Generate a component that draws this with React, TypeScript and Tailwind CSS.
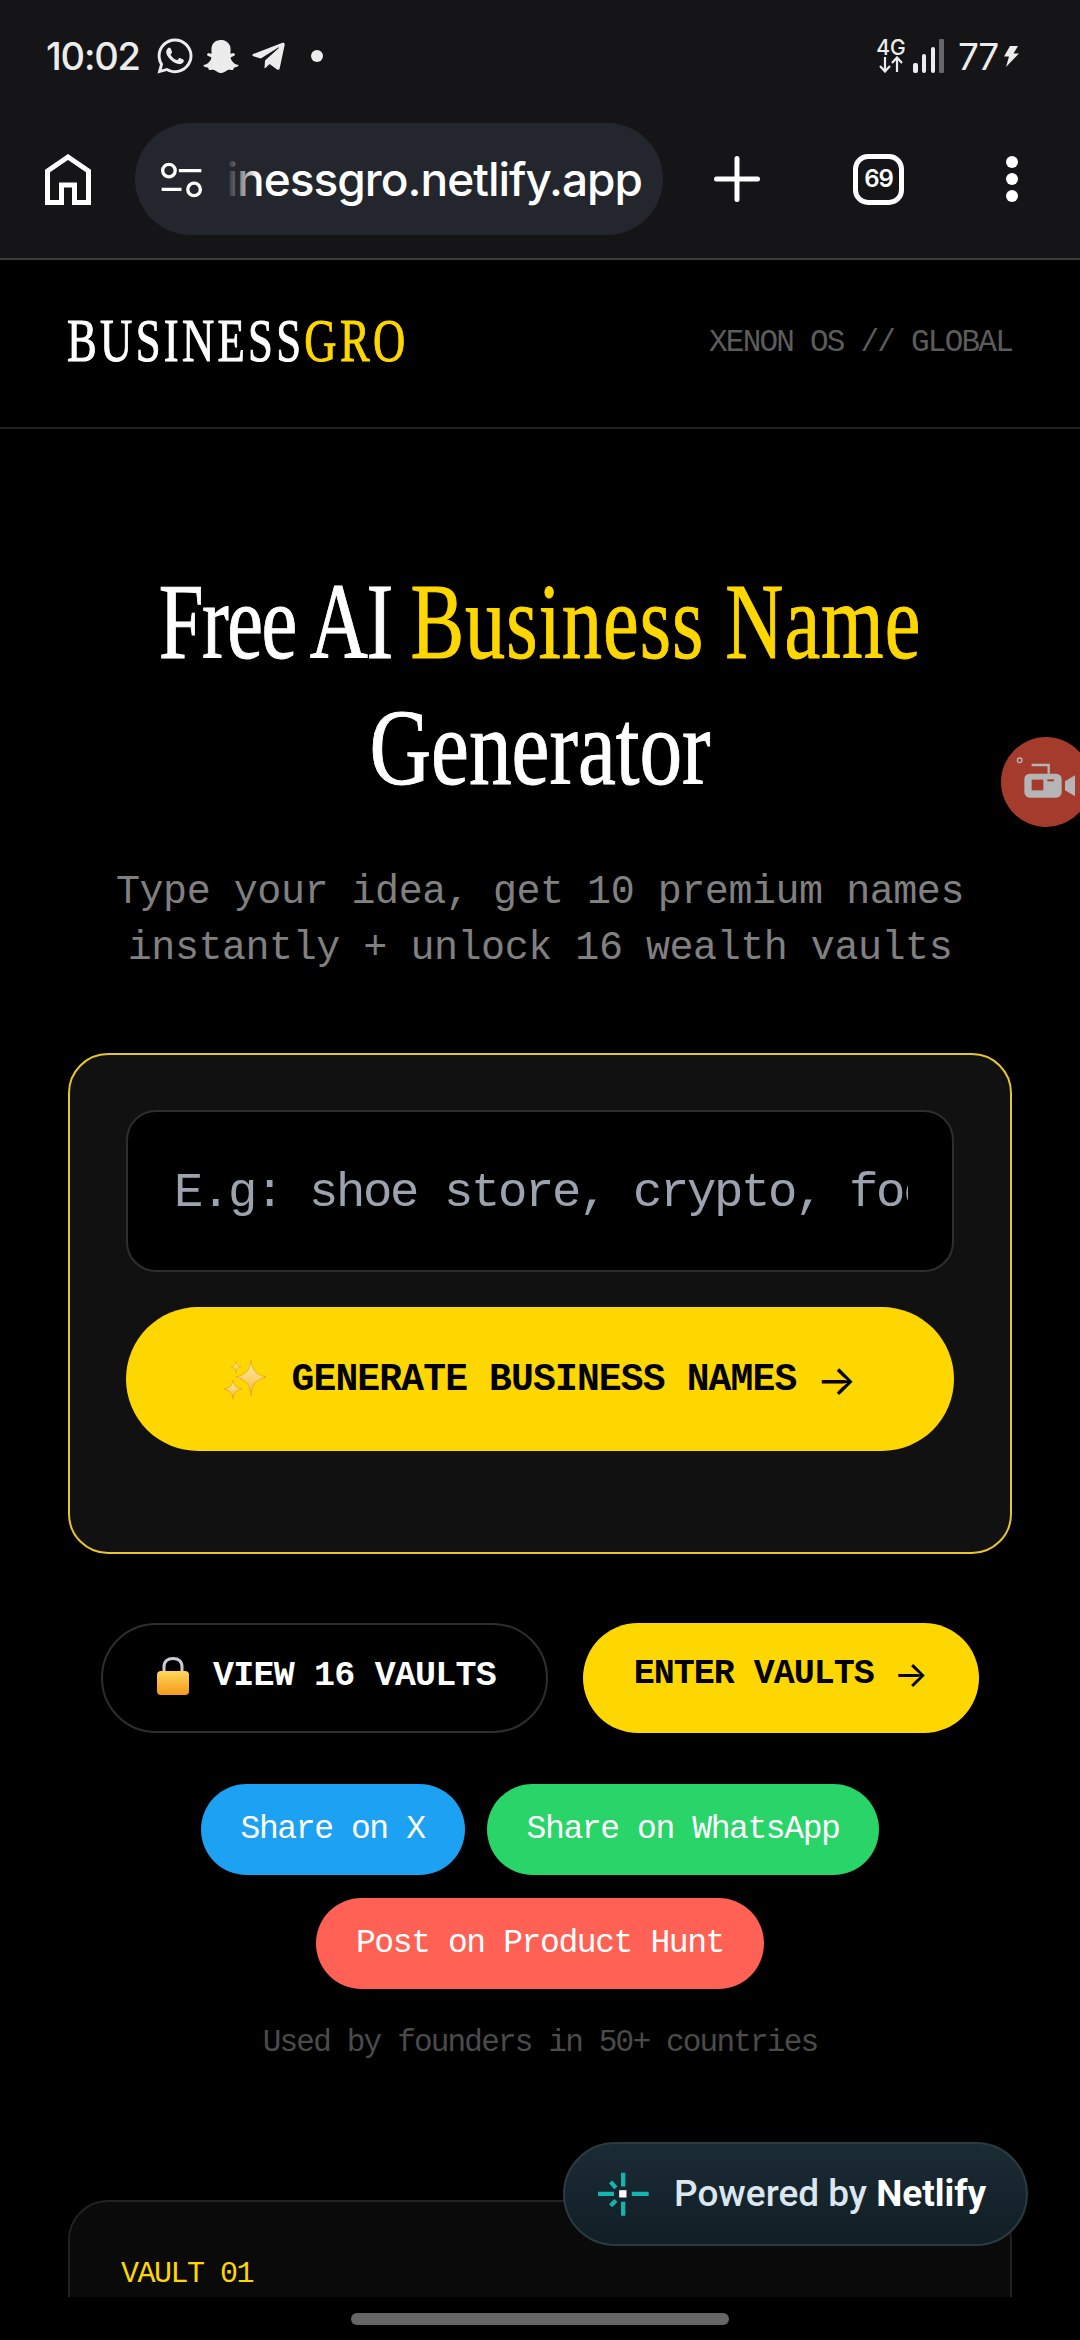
import { FaSnapchatGhost, FaTelegramPlane, FaWhatsapp } from 'react-icons/fa'

const mono = "font-['Liberation_Mono',monospace]"

function Arrow({ size }: { size: string }) {
  return <span className={`font-['Inter',sans-serif] font-normal tracking-normal ${size}`}>→</span>
}

function Sparkles() {
  return (
    <svg width="44" height="40" viewBox="0 0 44 40" className="shrink-0">
      <defs>
        <linearGradient id="spark" x1="0" y1="0" x2="0" y2="1">
          <stop offset="0" stopColor="#fff3b8" />
          <stop offset="1" stopColor="#f4b52e" />
        </linearGradient>
      </defs>
      <path d="M28 1 C29 11 32 15 43 18 C32 21 29 26 28 37 C27 26 24 21 13 18 C24 15 27 11 28 1Z" fill="url(#spark)" stroke="#e8a21c" strokeWidth="0.8" />
      <path d="M10 21 C11 27 13 29 19 30 C13 32 11 33 10 40 C9 33 7 32 1 30 C7 29 9 27 10 21Z" fill="url(#spark)" stroke="#e8a21c" strokeWidth="0.8" />
      <path d="M13 2 C13.5 6 14.5 7 18 8 C14.5 9 13.5 10 13 14 C12.5 10 11.5 9 8 8 C11.5 7 12.5 6 13 2Z" fill="url(#spark)" stroke="#e8a21c" strokeWidth="0.6" />
    </svg>
  )
}

function Lock() {
  return (
    <svg width="32" height="38" viewBox="0 0 32 38" className="shrink-0">
      <defs>
        <linearGradient id="lockBody" x1="0" y1="0" x2="0" y2="1">
          <stop offset="0" stopColor="#ffd75a" />
          <stop offset="1" stopColor="#f59a1b" />
        </linearGradient>
      </defs>
      <path d="M7 17 V10 C7 4 11 1.5 16 1.5 C21 1.5 25 4 25 10 V17" fill="none" stroke="#c9ccd2" strokeWidth="3" />
      <rect x="0" y="14" width="32" height="24" rx="4" fill="url(#lockBody)" />
    </svg>
  )
}

function StatusBar() {
  return (
    <div className="flex h-[112px] items-center pl-[46px] pr-[61px] font-['Inter',sans-serif] text-[#ececec]">
      <span className="w-[92px] text-[38px] leading-none font-medium tracking-[-1.2px]">10:02</span>
      <FaWhatsapp className="ml-[17px] h-[40px] w-[40px]" />
      <FaSnapchatGhost className="ml-[8px] h-[35px] w-[36px]" />
      <FaTelegramPlane className="ml-[11px] h-[37px] w-[37px]" />
      <div className="ml-[24px] h-[12px] w-[12px] rounded-full bg-[#ececec]" />
      <div className="ml-auto flex items-center">
        <div className="flex w-[30px] flex-col items-center">
          <span className="text-[21px] leading-[17px] font-medium">4G</span>
          <svg width="28" height="17" viewBox="0 0 28 17" fill="none" stroke="#ececec" strokeWidth="2.2">
            <path d="M8 1 V15 M3 10 L8 15.5 L13 10" />
            <path d="M20 16 V2 M15 7 L20 1.5 L25 7" />
          </svg>
        </div>
        <svg width="31" height="34" viewBox="0 0 31 34" className="ml-[7px]">
          <rect x="0" y="24" width="5" height="10" rx="2" fill="#ececec" />
          <rect x="9" y="15" width="4" height="19" rx="2" fill="#ececec" />
          <rect x="18" y="8" width="4" height="26" rx="2" fill="#ececec" />
          <rect x="26" y="0" width="5" height="34" rx="1" fill="#666" />
        </svg>
        <span className="ml-[14px] w-[38px] text-[37px] leading-none font-normal tracking-[-1.5px]">77</span>
        <svg width="16" height="21" viewBox="0 0 16 21" className="ml-[7px]" fill="#ececec">
          <path d="M7 0 H15 L10.5 7.5 H16 L3 21 L6 10.5 H1 Z" />
        </svg>
      </div>
    </div>
  )
}

function Toolbar() {
  return (
    <div className="mt-[11px] flex h-[112px] items-center pl-[45px] text-white">
      <svg width="46" height="51" viewBox="0 0 46 51" fill="none" stroke="#fff" strokeWidth="5" className="shrink-0">
        <path d="M2.5 48.5 V17 L23 3 L43.5 17 V48.5 H29.5 V31 H16.5 V48.5 Z" />
      </svg>
      <div className="relative ml-[44px] flex h-[112px] w-[528px] items-center overflow-hidden rounded-full bg-[#24262e] pl-[25px] pr-[21px]">
        <svg width="43" height="37" viewBox="475 420 130 110" fill="none" stroke="#fff" strokeWidth="10" className="shrink-0">
          <circle cx="502" cy="448" r="19" />
          <path d="M532 448 H600 M480 505 H540" />
          <circle cx="578" cy="505" r="19" />
        </svg>
        <div className="relative ml-[23px] flex flex-1 justify-end overflow-hidden">
          <span className="font-['Inter',sans-serif] text-[46px] leading-[60px] font-medium tracking-[-1px] whitespace-nowrap">businessgro.netlify.app</span>
          <div className="absolute inset-y-0 left-0 w-[32px] bg-gradient-to-r from-[#24262e] to-transparent" />
        </div>
      </div>
      <svg width="46" height="46" viewBox="0 0 46 46" stroke="#fff" strokeWidth="5" strokeLinecap="round" className="ml-[51px] shrink-0">
        <path d="M23 2.5 V43.5 M2.5 23 H43.5" />
      </svg>
      <div className="ml-[93px] flex h-[51px] w-[51px] shrink-0 items-center justify-center rounded-[15px] border-[5px] border-white font-['Inter',sans-serif] text-[24px] font-semibold tracking-[-1px]">
        69
      </div>
      <div className="ml-[102px] flex shrink-0 flex-col gap-[5px]">
        <div className="h-[12px] w-[12px] rounded-full bg-white" />
        <div className="h-[12px] w-[12px] rounded-full bg-white" />
        <div className="h-[12px] w-[12px] rounded-full bg-white" />
      </div>
    </div>
  )
}

export default function App() {
  return (
    <div className="relative flex h-[2340px] w-[1080px] flex-col overflow-hidden bg-black">
      {/* Browser chrome */}
      <div className="h-[260px] shrink-0 border-b-2 border-[#3c3c3c] bg-[#151517]">
        <StatusBar />
        <Toolbar />
      </div>

      {/* Page */}
      <div className="flex-1 overflow-hidden">
        <header className="flex h-[169px] items-center justify-between border-b-2 border-[#222] pl-[67px] pr-[68px]">
          <div className="-mt-[8px] origin-left scale-x-[0.72] font-['Liberation_Serif',serif] text-[62px] leading-none tracking-[4.6px] whitespace-nowrap text-white [-webkit-text-stroke:1px_currentColor]">
            BUSINESS<span className="text-[#ffd700]">GRO</span>
          </div>
          <div className={`${mono} text-[31px] tracking-[-1.77px] text-[#5c5c5c]`}>XENON OS // GLOBAL</div>
        </header>

        <main className="px-[68px]">
          <h1 className="-mx-[68px] mt-[130px] text-center font-['Liberation_Serif',serif] text-[108px] leading-[126px] text-white [-webkit-text-stroke:1px_currentColor]">
            <span className="block scale-x-[0.745] whitespace-nowrap">
              <span className="tracking-[-2px]">Free AI </span>
              <span className="tracking-[1.3px] text-[#ffd700]">Business Name</span>
            </span>
            <span className="block scale-x-[0.79] whitespace-nowrap">Generator</span>
          </h1>

          <p className={`${mono} mt-[54px] text-center text-[40px] leading-[56px] tracking-[-0.45px] text-[#808080]`}>
            Type your idea, get 10 premium names
            <br />
            instantly + unlock 16 wealth vaults
          </p>

          <section className="mt-[76px] h-[501px] rounded-[40px] border-2 border-[#e6c62e] bg-[#111] px-[56px] pt-[55px]">
            <input
              placeholder="E.g: shoe store, crypto, food..."
              className={`${mono} h-[162px] w-full rounded-[30px] border-2 border-[#2e2e2e] bg-black pt-[4px] pr-[44px] pl-[46px] text-[49px] tracking-[-2.4px] outline-none placeholder:text-[#9ca3af]`}
            />
            <button className="mt-[35px] flex h-[144px] w-full items-center justify-center gap-[24px] rounded-full bg-[#ffd700]">
              <Sparkles />
              <span className={`${mono} flex items-center gap-[20px] text-[38px] font-bold tracking-[-0.85px] whitespace-nowrap text-black`}>
                GENERATE BUSINESS NAMES <Arrow size="text-[42px]" />
              </span>
            </button>
          </section>

          <div className="mt-[69px] flex justify-center gap-[35px]">
            <button className="flex h-[110px] w-[447px] items-center justify-center gap-[24px] rounded-full border-2 border-[#2e2e2e] bg-black pb-[4px] pl-[4px]">
              <Lock />
              <span className={`${mono} text-[35px] font-bold tracking-[-0.8px] whitespace-nowrap text-white`}>VIEW 16 VAULTS</span>
            </button>
            <button className="flex h-[110px] w-[396px] items-center justify-center rounded-full bg-[#ffd700] pb-[8px]">
              <span className={`${mono} flex items-center gap-[20px] text-[35px] font-bold tracking-[-1px] whitespace-nowrap text-black`}>
                ENTER VAULTS <Arrow size="text-[36px]" />
              </span>
            </button>
          </div>

          <div className={`${mono} mt-[51px] flex flex-wrap justify-center gap-x-[22px] gap-y-[23px] text-[33px] tracking-[-1.4px] text-white`}>
            <a className="flex h-[91px] items-center rounded-full bg-[#1da1f2] px-[40px]">Share on X</a>
            <a className="flex h-[91px] items-center rounded-full bg-[#29d468] px-[40px]">Share on WhatsApp</a>
            <a className="flex h-[91px] items-center rounded-full bg-[#ff6154] px-[40px]">Post on Product Hunt</a>
          </div>

          <p className={`${mono} mt-[38px] text-center text-[31px] leading-[32px] tracking-[-1.8px] text-[#4b4b4b]`}>Used by founders in 50+ countries</p>

          <section className="mt-[141px] h-[300px] rounded-[40px] border-2 border-[#222] bg-[#0a0a0a] px-[51px] pt-[54px]">
            <div className={`${mono} text-[30px] leading-[36px] tracking-[-1.5px] text-[#ffd700]`}>VAULT 01</div>
          </section>
        </main>
      </div>

      {/* Gesture bar */}
      <div className="flex h-[43px] shrink-0 justify-center bg-black pt-[16px]">
        <div className="h-[12px] w-[378px] rounded-full bg-[#666]" />
      </div>

      {/* Netlify badge */}
      <div className="absolute right-[52px] bottom-[94px] flex h-[104px] w-[465px] items-center rounded-full border-2 border-[#2b3b42] bg-gradient-to-b from-[#1b2b34] to-[#111e26] pl-[30px]">
        <svg width="57" height="48" viewBox="160 150 170 145" className="shrink-0">
          <rect x="232" y="211" width="22" height="22" fill="#fff" />
          <path d="M244 158 V200 M244 246 V288 M168 222 H216 M270 222 H321 M206 186 L222 204 M206 258 L222 242" stroke="#14b5ae" strokeWidth="13" />
        </svg>
        <span className="ml-[22px] font-['Roboto',sans-serif] text-[37px] font-medium whitespace-nowrap text-[#dbe6ee]">
          Powered by <span className="font-bold text-white">Netlify</span>
        </span>
      </div>

      {/* Screen recorder bubble */}
      <div className="absolute top-[737px] left-[1001px] h-[90px] w-[90px] rounded-full bg-[#a53b2d]">
        <svg width="90" height="90" viewBox="123 80 270 270">
          <circle cx="179" cy="150" r="7" fill="none" stroke="#b5b5b5" strokeWidth="4" />
          <path d="M215 164 H266 V190" fill="none" stroke="#b5b5b5" strokeWidth="7" />
          <rect x="193" y="190" width="112" height="72" rx="16" fill="#b5b5b5" />
          <rect x="215" y="208" width="35" height="32" fill="#a53b2d" />
          <rect x="262" y="207" width="20" height="6" fill="#a53b2d" />
          <path d="M315 213 L345 195 V258 L315 240 Z" fill="#b5b5b5" />
        </svg>
      </div>
    </div>
  )
}
